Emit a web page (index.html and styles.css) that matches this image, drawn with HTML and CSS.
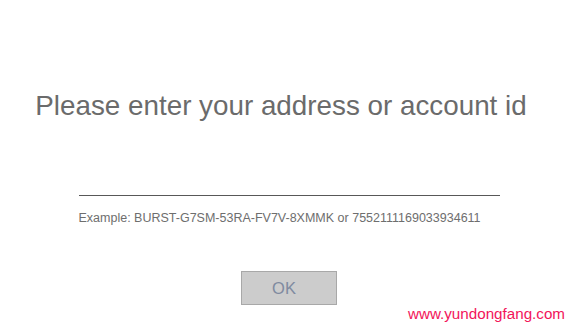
FILE: index.html
```html
<!DOCTYPE html>
<html>
<head>
<meta charset="utf-8">
<link rel="stylesheet" href="styles.css">
</head>
<body>
<main class="page">
  <h1 class="title">Please enter your address or account id</h1>
  <div class="field">
    <div class="input-line"></div>
    <p class="hint">Example: BURST-G7SM-53RA-FV7V-8XMMK or 7552111169033934611</p>
  </div>
  <button class="ok">OK</button>
</main>
<div class="watermark">www.yundongfang.com</div>
</body>
</html>
```

FILE: styles.css
```css
html, body {
  margin: 0;
  padding: 0;
  background: #ffffff;
}
body {
  width: 577px;
  height: 328px;
  position: relative;
  overflow: hidden;
  font-family: "Liberation Sans", Arial, sans-serif;
}
.page {
  display: flex;
  flex-direction: column;
  align-items: center;
  padding-top: 90px;
}
.title {
  margin: 0;
  font-weight: normal;
  font-size: 27.8px;
  line-height: 32px;
  color: #6b6b6b;
  padding-right: 15px;
}
.field {
  width: 421px;
  margin-top: 73px;
  padding-left: 1px;
}
.input-line {
  height: 1px;
  background: #585858;
}
.hint {
  margin: 14px 0 0 0;
  font-size: 12.5px;
  line-height: 16px;
  color: #6e6e6e;
}
.ok {
  margin-top: 45px;
  width: 96px;
  height: 34px;
  background: #cccccc;
  border: 1px solid #a8a8a8;
  font-family: "Liberation Sans", Arial, sans-serif;
  font-size: 16.5px;
  color: #7f8aa0;
  padding: 0 9px 0 0;
}
.watermark {
  position: absolute;
  right: 12px;
  bottom: 6px;
  font-size: 15.2px;
  color: #f2145a;
}
```
